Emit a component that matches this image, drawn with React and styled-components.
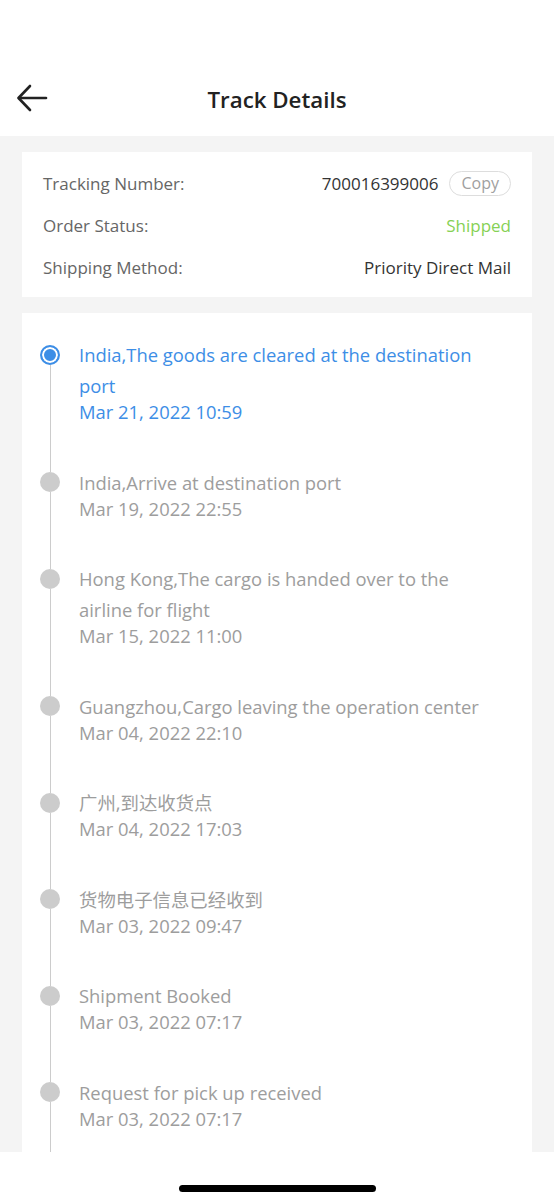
import React from 'react';
import styled, { createGlobalStyle } from 'styled-components';

const GlobalStyle = createGlobalStyle`
  html, body {
    margin: 0;
    padding: 0;
    background: #ffffff;
  }
  body {
    font-family: 'Open Sans', 'Noto Sans CJK SC', sans-serif;
  }
`;

const Page = styled.div`
  width: 554px;
  height: 1200px;
  display: flex;
  flex-direction: column;
  overflow: hidden;
  background: #f4f4f4;
`;

const Header = styled.header`
  background: #ffffff;
  padding-top: 60px;
  height: 76px;
  display: grid;
  grid-template-columns: 60px 1fr 60px;
  align-items: center;
`;

const BackButton = styled.button`
  border: none;
  background: none;
  padding: 0 0 0 16px;
  display: flex;
  align-items: center;
  cursor: pointer;
`;

const Title = styled.h1`
  margin: 0;
  text-align: center;
  font-size: 22.3px;
  font-weight: 600;
  color: #222222;
  padding-top: 2px;
`;

const Content = styled.main`
  flex: 1;
  overflow: hidden;
  padding: 16px 22px 0;
  display: flex;
  flex-direction: column;
  gap: 16px;
`;

const Card = styled.section`
  background: #ffffff;
`;

const InfoCard = styled(Card)`
  padding: 10px 21px 9px;
`;

const InfoRow = styled.div`
  height: 42px;
  display: flex;
  align-items: center;
  justify-content: space-between;
  font-size: 17px;
`;

const Label = styled.span`
  color: #666666;
`;

const Value = styled.span`
  display: flex;
  align-items: center;
  gap: 11px;
  color: ${({ $tone }) => ($tone === 'green' ? '#86d155' : '#333333')};
`;

const CopyButton = styled.button`
  font-family: inherit;
  font-size: 16px;
  color: #a0a0a0;
  background: #ffffff;
  border: 1px solid #dddddd;
  border-radius: 13px;
  height: 25px;
  padding: 0 11px;
  line-height: 22px;
`;

const TimelineCard = styled(Card)`
  flex: 1;
  padding-top: 26px;
`;

const Item = styled.div`
  display: grid;
  grid-template-columns: 56px 1fr;
`;

const Rail = styled.div`
  display: flex;
  flex-direction: column;
  align-items: center;
`;

const RailLine = styled.div`
  width: 1px;
  background: ${({ $hide }) => ($hide ? 'transparent' : '#cccccc')};
  height: ${({ $grow }) => ($grow ? 'auto' : '5.5px')};
  flex: ${({ $grow }) => ($grow ? 1 : 'none')};
`;

const Dot = styled.div`
  width: 20px;
  height: 20px;
  flex: none;
  border-radius: 50%;
  box-sizing: border-box;
  background: ${({ $active }) => ($active ? '#3d8ee6' : '#cccccc')};
  border: ${({ $active }) => ($active ? '2px solid #3d8ee6' : 'none')};
  box-shadow: ${({ $active }) => ($active ? 'inset 0 0 0 2px #ffffff' : 'none')};
`;

const Body = styled.div`
  padding: 0 42px 44.5px 1px;
  color: ${({ $active }) => ($active ? '#3d8ee6' : '#9d9d9d')};
  font-size: 18.4px;
`;

const Event = styled.div`
  line-height: 31px;
`;

const Time = styled.div`
  line-height: 21px;
`;

const HomeBar = styled.div`
  height: 48px;
  flex: none;
  background: #ffffff;
  display: flex;
  justify-content: center;
  align-items: flex-end;
  padding-bottom: 8px;
  box-sizing: border-box;
`;

const Indicator = styled.div`
  width: 197px;
  height: 7px;
  border-radius: 4px;
  background: #000000;
`;

const events = [
  ['India,The goods are cleared at the destination port', 'Mar 21, 2022 10:59'],
  ['India,Arrive at destination port', 'Mar 19, 2022 22:55'],
  ['Hong Kong,The cargo is handed over to the airline for flight', 'Mar 15, 2022 11:00'],
  ['Guangzhou,Cargo leaving the operation center', 'Mar 04, 2022 22:10'],
  ['广州,到达收货点', 'Mar 04, 2022 17:03'],
  ['货物电子信息已经收到', 'Mar 03, 2022 09:47'],
  ['Shipment Booked', 'Mar 03, 2022 07:17'],
  ['Request for pick up received', 'Mar 03, 2022 07:17'],
];

const BackArrow = () => (
  <svg width="32" height="30" viewBox="0 0 32 30" fill="none" stroke="#222" strokeWidth="2.6" strokeLinecap="round" strokeLinejoin="round">
    <path d="M30 15H3" />
    <path d="M14 3L2.5 15L14 27" />
  </svg>
);

export default function App() {
  return (
    <Page>
      <GlobalStyle />
      <Header>
        <BackButton aria-label="Back">
          <BackArrow />
        </BackButton>
        <Title>Track Details</Title>
        <span />
      </Header>
      <Content>
        <InfoCard>
          <InfoRow>
            <Label>Tracking Number:</Label>
            <Value>
              700016399006
              <CopyButton>Copy</CopyButton>
            </Value>
          </InfoRow>
          <InfoRow>
            <Label>Order Status:</Label>
            <Value $tone="green">Shipped</Value>
          </InfoRow>
          <InfoRow>
            <Label>Shipping Method:</Label>
            <Value>Priority Direct Mail</Value>
          </InfoRow>
        </InfoCard>
        <TimelineCard>
          {events.map(([text, time], i) => (
            <Item key={i}>
              <Rail>
                <RailLine $hide={i === 0} />
                <Dot $active={i === 0} />
                <RailLine $grow />
              </Rail>
              <Body $active={i === 0}>
                <Event>{text}</Event>
                <Time>{time}</Time>
              </Body>
            </Item>
          ))}
        </TimelineCard>
      </Content>
      <HomeBar>
        <Indicator />
      </HomeBar>
    </Page>
  );
}
